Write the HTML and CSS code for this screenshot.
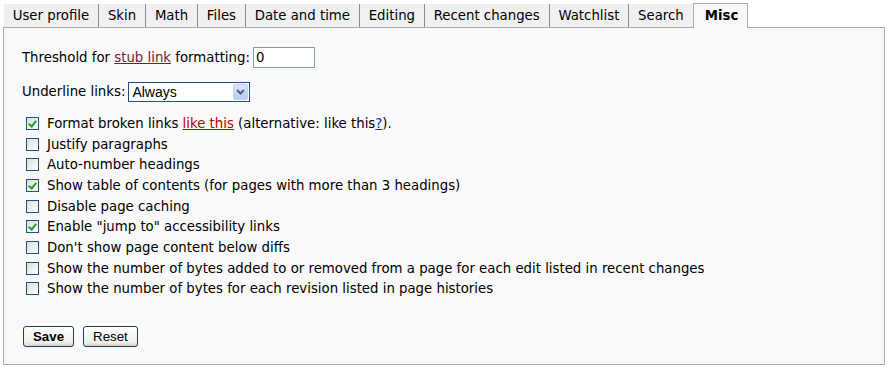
FILE: index.html
```html
<!DOCTYPE html>
<html lang="en">
<head>
    <meta charset="UTF-8">
    <title>Preferences - Misc</title>
    <link rel="stylesheet" href="styles.css">
</head>
<body>

    <ul class="tabs">
        <li>User profile</li>
        <li>Skin</li>
        <li>Math</li>
        <li>Files</li>
        <li>Date and time</li>
        <li>Editing</li>
        <li>Recent changes</li>
        <li>Watchlist</li>
        <li>Search</li>
        <li class="selected">Misc</li>
    </ul>

    <form class="prefs">
        <div class="field">
            <label for="stubthreshold">Threshold for <a href="#" class="stub">stub link</a> formatting:</label>
            <input type="text" id="stubthreshold" class="textbox" value="0">
        </div>

        <div class="field field-last">
            <label for="underline">Underline links:</label>
            <span class="select-box">
                <select id="underline">
                    <option>Always</option>
                    <option>Never</option>
                    <option>Browser default</option>
                </select>
                <span class="select-arrow">
                    <svg width="9" height="6" viewBox="0 0 9 6"><path d="M1 1 L4.5 4.5 L8 1" fill="none" stroke="#4d6185" stroke-width="2"/></svg>
                </span>
            </span>
        </div>

        <!-- checkbox options -->
        <div class="toggles">
            <div class="toggle"><input type="checkbox" id="highbroken" checked><label for="highbroken">Format broken links <a href="#" class="new">like this</a> (alternative: like this<a href="#" class="qmark">?</a>).</label></div>
            <div class="toggle"><input type="checkbox" id="justify"><label for="justify">Justify paragraphs</label></div>
            <div class="toggle"><input type="checkbox" id="numberheadings"><label for="numberheadings">Auto-number headings</label></div>
            <div class="toggle"><input type="checkbox" id="showtoc" checked><label for="showtoc">Show table of contents (for pages with more than 3 headings)</label></div>
            <div class="toggle"><input type="checkbox" id="nocache"><label for="nocache">Disable page caching</label></div>
            <div class="toggle"><input type="checkbox" id="jumplinks" checked><label for="jumplinks">Enable "jump to" accessibility links</label></div>
            <div class="toggle"><input type="checkbox" id="diffonly"><label for="diffonly">Don't show page content below diffs</label></div>
            <div class="toggle"><input type="checkbox" id="rcbytes"><label for="rcbytes">Show the number of bytes added to or removed from a page for each edit listed in recent changes</label></div>
            <div class="toggle"><input type="checkbox" id="histbytes"><label for="histbytes">Show the number of bytes for each revision listed in page histories</label></div>
        </div>

        <div class="buttons">
            <button type="submit" class="btn btn-save">Save</button>
            <button type="reset" class="btn">Reset</button>
        </div>
    </form>

</body>
</html>
```

FILE: styles.css
```css
body {
    margin: 0;
    padding: 0 3px;
    background-color: #ffffff;
    font-family: "DejaVu Sans", Verdana, sans-serif;
    font-size: 13.3px;
    color: #000;
}

a {
    text-decoration: underline;
}

a.stub {
    color: #772233;
}

a.new {
    color: #ba0000;
}

a.qmark {
    color: #002bb8;
}

/* tabs */
.tabs {
    list-style: none;
    margin: 0;
    padding: 3px 0 0 1px;
    display: flex;
    align-items: flex-end;
    height: 24px;
}

.tabs li {
    background-color: #f0f0f0;
    border-right: 1px solid #8c8c8c;
    height: 23px;
    line-height: 24px;
    padding: 0 9px 0 8.7px;
}

.tabs li.selected {
    position: relative;
    top: 1px;
    height: 24px;
    margin-left: -1px;
    background-color: #f9f9f9;
    border: 1px solid #aaa;
    border-bottom: none;
    font-weight: bold;
    padding: 0 9px 0 11px;
}

/* form box */
.prefs {
    border: 1px solid #aaa;
    background-color: #f9f9f9;
    padding: 19px 18px 19px 18px;
    height: 298px;
}

.field {
    display: flex;
    align-items: center;
    height: 21px;
    margin-bottom: 13px;
}

.field-last {
    margin-bottom: 11px;
}

.field label {
    margin-right: 3px;
}

.textbox {
    width: 62px;
    height: 21px;
    box-sizing: border-box;
    border: 1px solid #7f9db9;
    background: #fff;
    font-family: "DejaVu Sans", Verdana, sans-serif;
    font-size: 13.3px;
    padding: 0 2px;
    margin: 0;
}

.select-box {
    display: inline-flex;
    align-items: center;
    width: 122px;
    height: 20px;
    box-sizing: border-box;
    border: 1px solid #1c5180;
    background: #fff;
}

.select-box select {
    appearance: none;
    border: none;
    background: transparent;
    flex: 1;
    min-width: 0;
    font-family: "Liberation Sans", Arial, sans-serif;
    font-size: 14px;
    padding: 0 0 0 3px;
    margin: 0;
    height: 18px;
    outline: none;
}

.select-arrow {
    width: 15px;
    height: 16px;
    margin-right: 1px;
    display: flex;
    align-items: center;
    justify-content: center;
    background: linear-gradient(#dce6fb, #b8cbf5);
    border: 1px solid #c2d2f3;
    box-sizing: border-box;
    border-radius: 2px;
}

/* checkboxes */
.toggle {
    display: flex;
    align-items: center;
    height: 20.7px;
}

.toggle input {
    appearance: none;
    width: 13px;
    height: 13px;
    margin: 0 8px 0 4px;
    border: 1px solid #1c5180;
    background: linear-gradient(135deg, #dcdcd7, #ffffff);
    position: relative;
    flex-shrink: 0;
}

.toggle input:checked::after {
    content: "";
    position: absolute;
    left: 3px;
    top: 1px;
    width: 3px;
    height: 6px;
    border: solid #21a121;
    border-width: 0 2px 2px 0;
    transform: rotate(40deg);
}

/* buttons */
.buttons {
    margin-top: 27px;
    display: flex;
    gap: 8px;
}

.btn {
    font-family: "Liberation Sans", Arial, sans-serif;
    font-size: 13.3px;
    height: 21px;
    padding: 0 9px;
    border: 1px solid #1c3d5d;
    border-radius: 3px;
    background: linear-gradient(#ffffff, #f0f0ea 80%, #d6d0c5);
    color: #000;
    margin: 0 0 0 1px;
}

.btn-save {
    font-weight: bold;
}
```
